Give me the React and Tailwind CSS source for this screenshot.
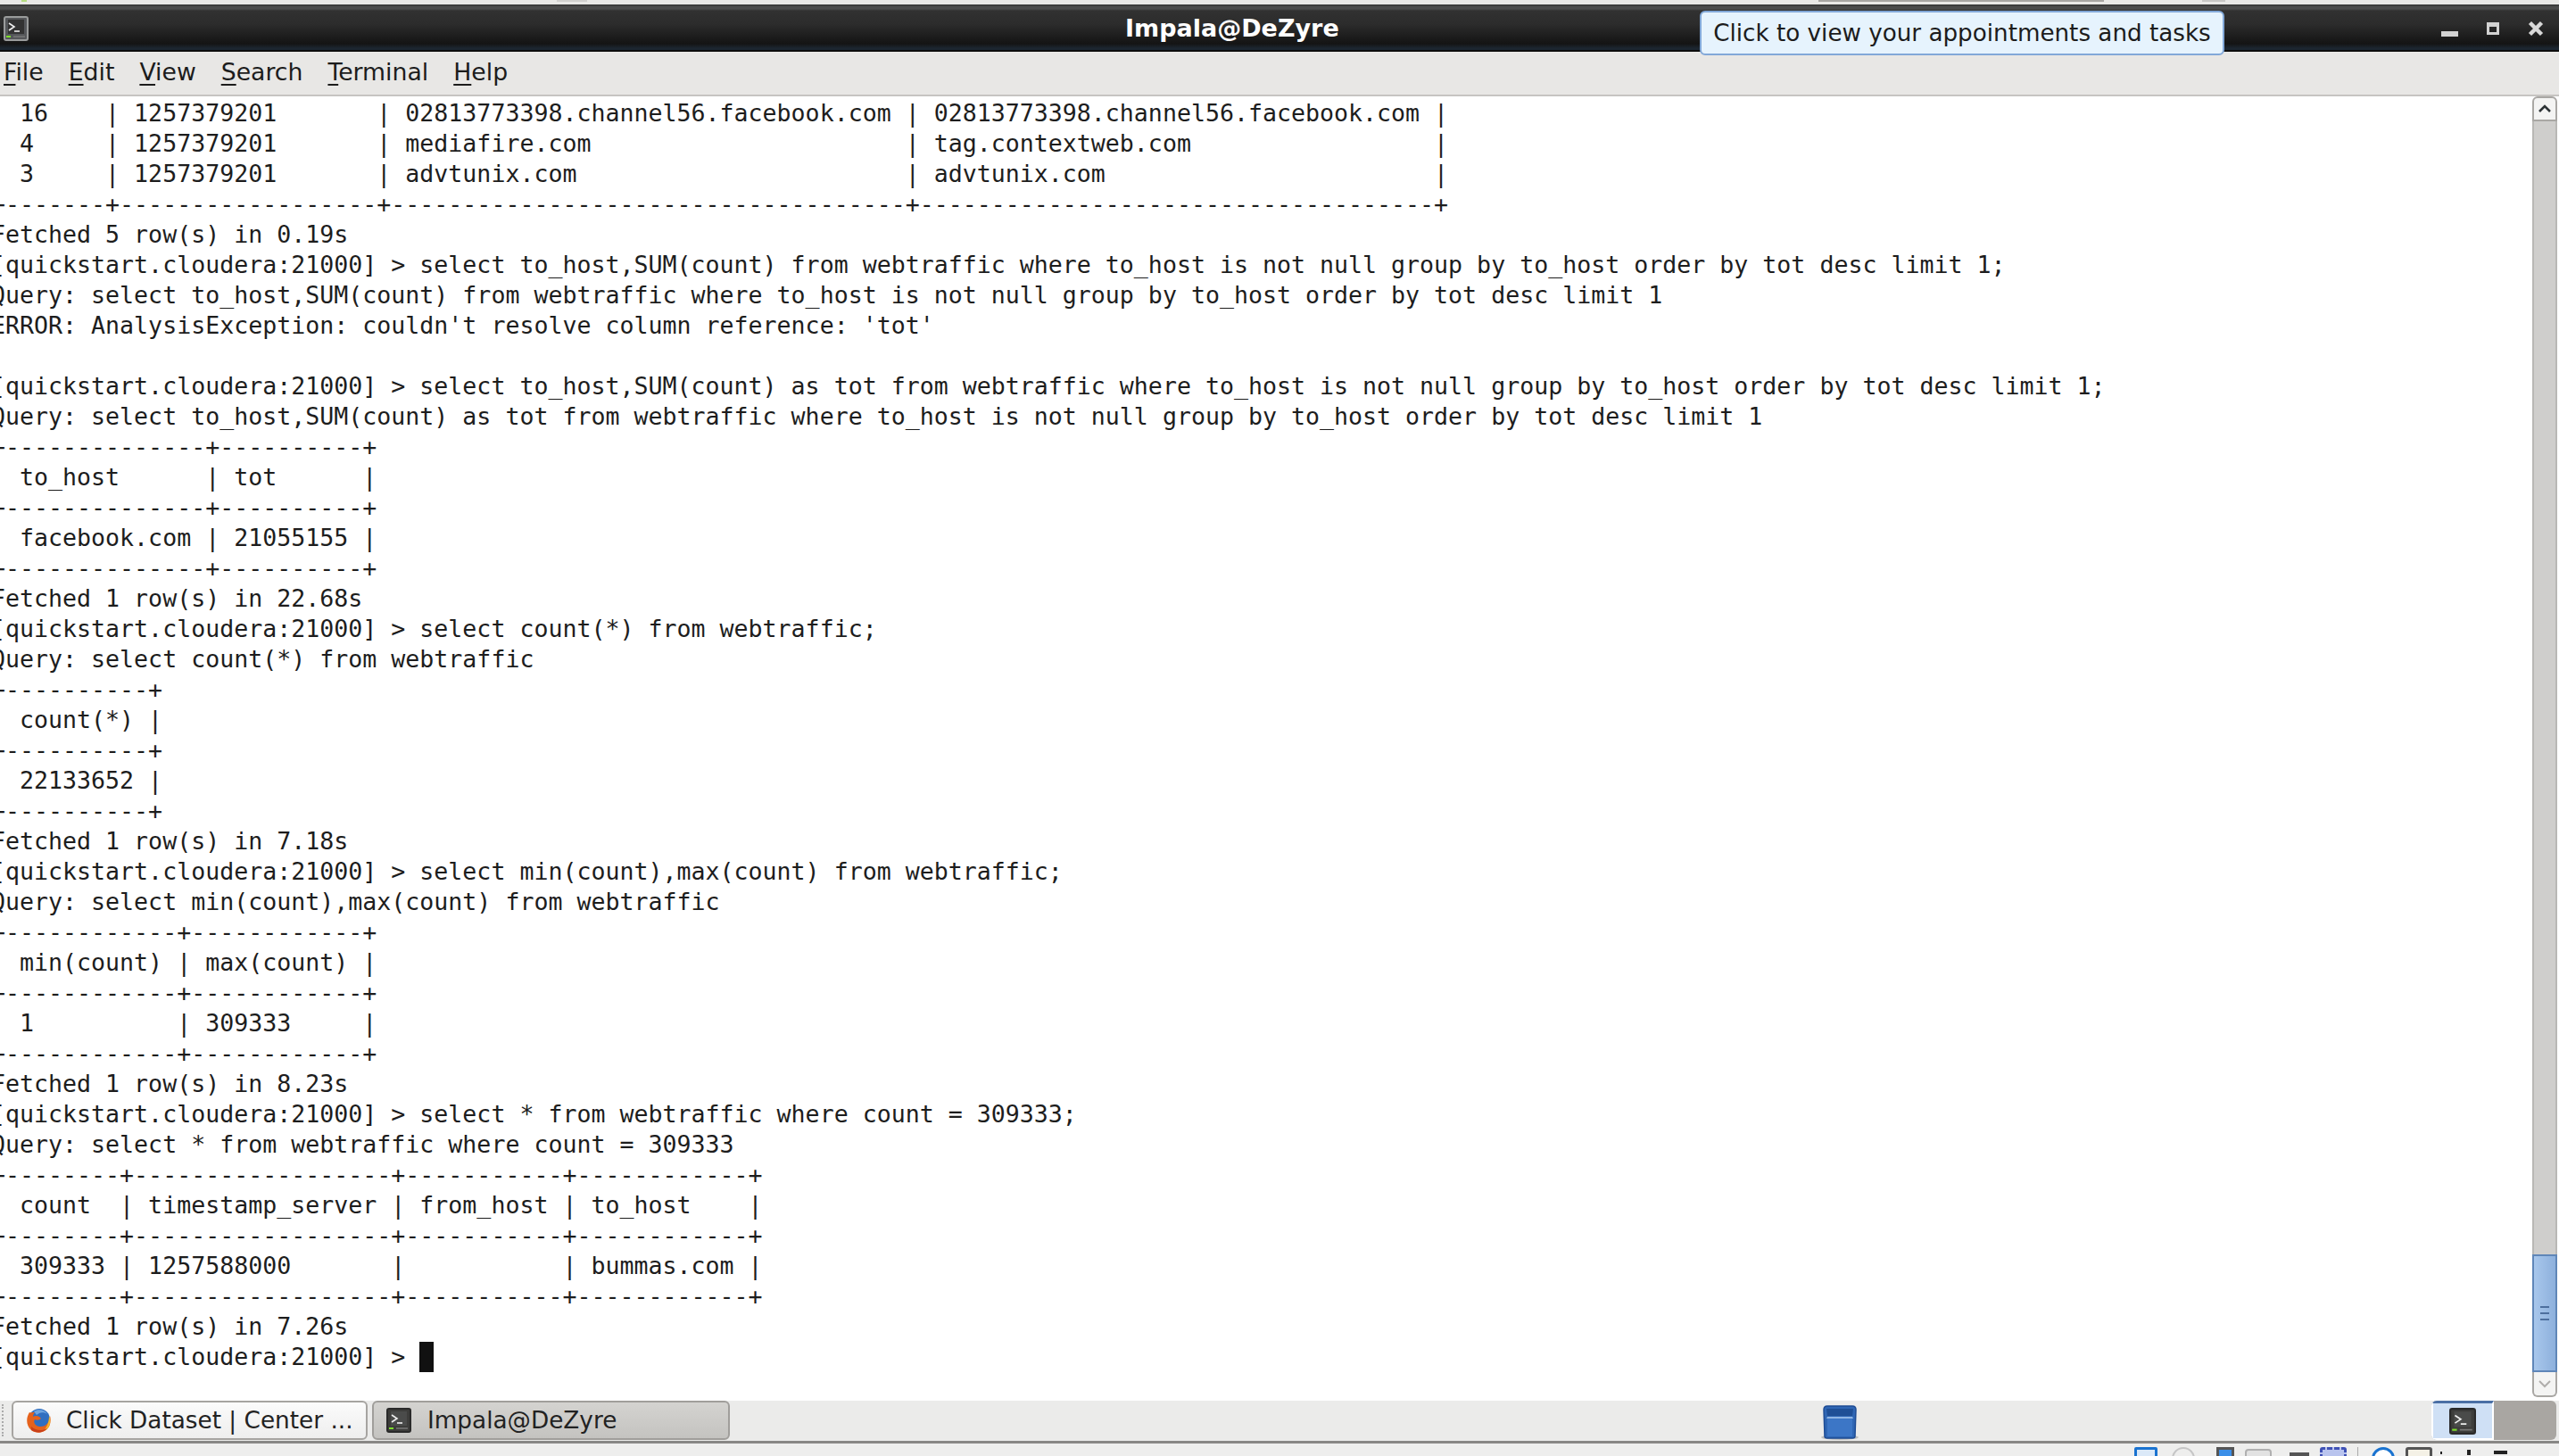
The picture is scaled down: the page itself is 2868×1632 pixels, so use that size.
const LINES = [
"| 16    | 1257379201       | 02813773398.channel56.facebook.com | 02813773398.channel56.facebook.com |",
"| 4     | 1257379201       | mediafire.com                      | tag.contextweb.com                 |",
"| 3     | 1257379201       | advtunix.com                       | advtunix.com                       |",
"+-------+------------------+------------------------------------+------------------------------------+",
"Fetched 5 row(s) in 0.19s",
"[quickstart.cloudera:21000] > select to_host,SUM(count) from webtraffic where to_host is not null group by to_host order by tot desc limit 1;",
"Query: select to_host,SUM(count) from webtraffic where to_host is not null group by to_host order by tot desc limit 1",
"ERROR: AnalysisException: couldn't resolve column reference: 'tot'",
"",
"[quickstart.cloudera:21000] > select to_host,SUM(count) as tot from webtraffic where to_host is not null group by to_host order by tot desc limit 1;",
"Query: select to_host,SUM(count) as tot from webtraffic where to_host is not null group by to_host order by tot desc limit 1",
"+--------------+----------+",
"| to_host      | tot      |",
"+--------------+----------+",
"| facebook.com | 21055155 |",
"+--------------+----------+",
"Fetched 1 row(s) in 22.68s",
"[quickstart.cloudera:21000] > select count(*) from webtraffic;",
"Query: select count(*) from webtraffic",
"+----------+",
"| count(*) |",
"+----------+",
"| 22133652 |",
"+----------+",
"Fetched 1 row(s) in 7.18s",
"[quickstart.cloudera:21000] > select min(count),max(count) from webtraffic;",
"Query: select min(count),max(count) from webtraffic",
"+------------+------------+",
"| min(count) | max(count) |",
"+------------+------------+",
"| 1          | 309333     |",
"+------------+------------+",
"Fetched 1 row(s) in 8.23s",
"[quickstart.cloudera:21000] > select * from webtraffic where count = 309333;",
"Query: select * from webtraffic where count = 309333",
"+--------+------------------+-----------+------------+",
"| count  | timestamp_server | from_host | to_host    |",
"+--------+------------------+-----------+------------+",
"| 309333 | 1257588000       |           | bummas.com |",
"+--------+------------------+-----------+------------+",
"Fetched 1 row(s) in 7.26s",
];

function TermIcon({ size = 28, dark = false }) {
  return (
    <svg width={size} height={size} viewBox="0 0 28 28">
      <rect x="1" y="1" width="26" height="26" rx="2" fill={dark ? "#3d3d3b" : "#55575a"} stroke={dark ? "#2a2a2a" : "#9a9c9c"} strokeWidth="2" />
      <rect x="5" y="4" width="18" height="16" fill={dark ? "#4a4b4a" : "#333"} />
      <path d="M6 8 L12 12 L6 16" fill="none" stroke="#eee" strokeWidth="1.6" />
      <path d="M12 17 H18" stroke="#eee" strokeWidth="1.6" />
      <rect x="3" y="22" width="5" height="2" fill="#7ddc2c" />
      <path d="M11 23 H24" stroke="#777" strokeWidth="1.5" />
    </svg>
  );
}

function Firefox() {
  return (
    <svg width="30" height="30" viewBox="0 0 30 30">
      <circle cx="16" cy="14" r="12" fill="#2f6fc0" />
      <path d="M10 5 C15 2 22 3 25 8 C21 5 16 6 13 9 Z" fill="#6fa6e0" />
      <path d="M5 6 C1 12 1 21 7 26 C13 31 23 29 27 22 C29 18 29 13 28 10 C28 17 23 23 16 22 C11 21 9 17 11 14 C13 15 16 15 18 13 C16 10 12 9 9 11 C9 9 10 7 11 6 C8 6 6 7 5 6 Z" fill="#e5621c" />
      <path d="M27 10 C30 16 28 24 21 27 C24 23 27 18 27 10 Z" fill="#f6b52b" />
      <path d="M7 26 C13 30 21 29 25 24 C20 27 12 27 7 22 Z" fill="#c9401a" />
    </svg>
  );
}

function Trash() {
  return (
    <svg width="44" height="42" viewBox="0 0 44 42">
      <ellipse cx="22" cy="37" rx="21" ry="3" fill="#00000030" />
      <path d="M4 6 Q4 2 8 2 H36 Q40 2 40 6 L39 36 Q39 38 36 38 H8 Q5 38 5 36 Z" fill="#2f66b4" stroke="#1e4c94" strokeWidth="1.5" />
      <path d="M7 5 H37 L36 13 H8 Z" fill="#1f4f96" />
      <path d="M8 14 H36 L37 16 H7 Z" fill="#8fb4e4" />
      <rect x="8" y="16" width="28" height="20" fill="#3c76c6" />
    </svg>
  );
}

function Menu({ first, rest, className }) {
  return (
    <span className={className}>
      <span className="underline underline-offset-[4px] decoration-2">{first}</span>
      {rest}
    </span>
  );
}

export default function App() {
  return (
    <div className="relative w-[2868px] h-[1632px] overflow-hidden bg-white font-['DejaVu_Sans',sans-serif] flex flex-col">
      {/* sliver of the window behind */}
      <div className="h-[5px] shrink-0 bg-[#e9e8e6] flex items-start">
        <div className="ml-[24px] w-[6px] h-[2px] bg-[#b5dc80]" />
        <div className="ml-[594px] w-[34px] h-[2px] bg-[#d2d1cf]" />
        <div className="ml-[1380px] w-[320px] h-[2px] bg-[#a8a6a3]" />
        <div className="ml-[110px] w-[26px] h-[2px] bg-[#c8c7c5]" />
      </div>

      {/* title bar */}
      <div className="h-[53px] shrink-0 grid grid-cols-[1261px_auto_1fr] items-center border-t-2 border-t-[#3c3c3c] border-b-2 border-b-[#0c0c0c] bg-[linear-gradient(#4c4c4c_0px,#4c4c4c_3px,#313131_5px,#2c2c2c_20px,#141414_42px,#1c2630_47px,#1c2630_49px)]">
        <div className="pl-[4px] pt-[1px] flex items-center">
          <TermIcon size={28} />
        </div>
        <div className="text-white font-bold text-[27px] leading-none -mt-[1px]">Impala@DeZyre</div>
        <div className="flex items-center justify-end gap-[32px] pr-[17px]">
          <div className="w-[19px] h-[6px] mt-[12px] bg-[#d2d2d2]" />
          <div className="w-[14px] h-[14px] border-[3px] border-t-[5px] border-[#d2d2d2]" />
          <svg width="18" height="18" viewBox="0 0 18 18">
            <path d="M2.5 2.5 L15.5 15.5 M15.5 2.5 L2.5 15.5" stroke="#d8d8d8" strokeWidth="4.5" />
          </svg>
        </div>
      </div>

      {/* menu bar */}
      <div className="h-[50px] shrink-0 flex items-center bg-[#e8e7e5] border-b-2 border-b-[#c6c4c1] text-[26.7px] text-[#1c1c1c] leading-none pb-[1px]">
        <Menu first="F" rest="ile" className="ml-[4px]" />
        <Menu first="E" rest="dit" className="ml-[28px]" />
        <Menu first="V" rest="iew" className="ml-[28px]" />
        <Menu first="S" rest="earch" className="ml-[28px]" />
        <Menu first="T" rest="erminal" className="ml-[28px]" />
        <Menu first="H" rest="elp" className="ml-[28px]" />
      </div>

      {/* terminal */}
      <div className="h-[1462px] shrink-0 flex bg-white">
        <div className="flex-1 min-w-0 overflow-hidden pt-[2px]">
          <pre className="-ml-[10px] font-['DejaVu_Sans_Mono',monospace] text-[26.6px] leading-[34px] text-[#1d1d1d] whitespace-pre">
            {LINES.join("\n")}
            {"\n[quickstart.cloudera:21000] > "}
            <span className="inline-block w-[16px] h-[34px] align-top bg-[#111]" />
          </pre>
        </div>
        <div className="w-[30px] shrink-0 flex flex-col pb-[4px] pr-[2px]">
          <div className="h-[28px] shrink-0 flex items-center justify-center rounded-t-[6px] border-2 border-[#a9a7a4] bg-[#f4f4f3]">
            <svg width="16" height="10" viewBox="0 0 16 10"><path d="M2 8 L8 2 L14 8" fill="none" stroke="#2e3436" strokeWidth="2.6" /></svg>
          </div>
          <div className="flex-1 bg-[#cfcecc] border-x-2 border-[#b9b8b5]" />
          <div className="h-[132px] shrink-0 flex flex-col items-center justify-center gap-[5px] border-2 border-[#5f86b8] bg-[linear-gradient(90deg,#a8c7ec,#8db0dc)]">
            <div className="w-[10px] h-[2px] bg-[#4d6f9e]" />
            <div className="w-[10px] h-[2px] bg-[#4d6f9e]" />
            <div className="w-[10px] h-[2px] bg-[#4d6f9e]" />
          </div>
          <div className="h-[28px] shrink-0 flex items-center justify-center rounded-b-[6px] border-2 border-t-0 border-[#a9a7a4] bg-[#f4f4f3]">
            <svg width="16" height="10" viewBox="0 0 16 10"><path d="M2 2 L8 8 L14 2" fill="none" stroke="#b0aeab" strokeWidth="2" /></svg>
          </div>
        </div>
      </div>

      {/* task bar */}
      <div className="h-[48px] shrink-0 flex items-center bg-[#ebebea] border-b-[3px] border-b-[#888785] text-[26.3px] text-[#222] leading-none pb-[1px]">
        <div className="ml-[2px] w-[3px] h-[36px] border-l-2 border-dotted border-[#aaa]" />
        <div className="ml-[8px] w-[399px] h-[44px] flex items-center rounded-[6px] border-2 border-[#a6a4a1] bg-[linear-gradient(#fbfbfb,#eeeeee)] pl-[13px]">
          <Firefox />
          <span className="ml-[16px] mt-[1px] whitespace-nowrap">Click Dataset | Center ...</span>
        </div>
        <div className="ml-[5px] w-[401px] h-[44px] flex items-center rounded-[6px] border-2 border-[#a09e9b] bg-[linear-gradient(#d4d3d0,#c4c3c0)] pl-[14px]">
          <TermIcon size={28} dark />
          <span className="ml-[18px] mt-[1px] whitespace-nowrap">Impala@DeZyre</span>
        </div>
        <div className="ml-[1222px] mt-[5px]"><Trash /></div>
        <div className="ml-[641px] w-[140px] h-[44px] flex rounded-[6px] overflow-hidden bg-[#a9a6a2]">
          <div className="w-[70px] h-full flex items-center justify-center border-t-[3px] border-t-[#4a6fa5] border-x-2 border-b-2 border-x-white border-b-white bg-[#cfe0f5]">
            <TermIcon size={30} dark />
          </div>
        </div>
      </div>

      {/* bottom panel, tray icons cut off by the screen edge */}
      <div className="flex-1 flex items-start bg-[#eeeeed] pl-[2392px] pt-[4px] overflow-hidden">
        <div className="w-[26px] h-[22px] border-[3px] border-[#1a73d0] rounded-[2px] bg-[#dbe9f8]" />
        <div className="ml-[16px] w-[26px] h-[26px] rounded-full border-2 border-[#c6c6c6]" />
        <div className="ml-[24px] w-[20px] h-[22px] border-[3px] border-[#555] bg-[#3b8fe8]" />
        <div className="ml-[12px] w-[30px] h-[20px] mt-[2px] rounded-t-[4px] border-2 border-[#b0b0b0] bg-[#e2e2e2]" />
        <div className="ml-[20px] w-[22px] h-[4px] mt-[6px] bg-[#555]" />
        <div className="ml-[12px] w-[30px] h-[22px] rounded-[3px] border-[3px] border-dashed border-[#3f51b5] bg-[#b9c4ee]" />
        <div className="ml-[12px] w-[1px] h-[22px] bg-[#aaa]" />
        <div className="ml-[15px] w-[26px] h-[26px] rounded-full border-[3px] border-[#1a73d0] bg-white" />
        <div className="ml-[12px] w-[30px] h-[22px] rounded-[3px] border-[3px] border-[#555] bg-[#f4f1e6]" />
        <div className="ml-[9px] w-[2px] h-[3px] mt-[5px] bg-[#222]" />
        <div className="ml-[28px] w-[4px] h-[6px] mt-[3px] bg-[#222]" />
        <div className="ml-[26px] w-[15px] h-[4px] mt-[4px] bg-[#222]" />
      </div>

      {/* tooltip */}
      <div className="absolute left-[1905px] top-[12px] w-[588px] h-[50px] flex items-center justify-center rounded-[6px] border-2 border-[#82a8d8] bg-[#e6f3fd] text-[26.2px] text-[#1c1c1c] leading-none whitespace-nowrap">
        Click to view your appointments and tasks
      </div>
    </div>
  );
}
